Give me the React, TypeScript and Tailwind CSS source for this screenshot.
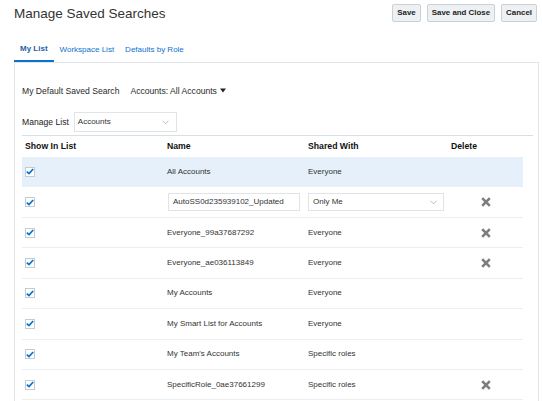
import React from 'react'

type Row = {
  name: string
  shared: string
  canDelete: boolean
  editing?: boolean
  selected?: boolean
}

const rows: Row[] = [
  { name: 'All Accounts', shared: 'Everyone', canDelete: false, selected: true },
  { name: 'AutoSS0d235939102_Updated', shared: 'Only Me', canDelete: true, editing: true },
  { name: 'Everyone_99a37687292', shared: 'Everyone', canDelete: true },
  { name: 'Everyone_ae036113849', shared: 'Everyone', canDelete: true },
  { name: 'My Accounts', shared: 'Everyone', canDelete: false },
  { name: 'My Smart List for Accounts', shared: 'Everyone', canDelete: false },
  { name: "My Team's Accounts", shared: 'Specific roles', canDelete: false },
  { name: 'SpecificRole_0ae37661299', shared: 'Specific roles', canDelete: true },
]

function Checkbox() {
  return (
    <span className="flex h-[10px] w-[10px] items-center justify-center border border-[#c3ccd3] bg-white">
      <svg width="8" height="7" viewBox="0 0 8 7">
        <path d="M0.8 3.6 L3 5.6 L7.2 1" fill="none" stroke="#0b72ce" strokeWidth="1.8" />
      </svg>
    </span>
  )
}

function Chevron() {
  return (
    <svg width="7" height="5" viewBox="0 0 7 5">
      <path d="M0.5 0.8 L3.5 3.8 L6.5 0.8" fill="none" stroke="#a9b1b8" strokeWidth="0.9" />
    </svg>
  )
}

function DeleteIcon() {
  return (
    <svg width="10" height="10" viewBox="0 0 10 10">
      <path d="M1.2 1.2 L8.8 8.8 M8.8 1.2 L1.2 8.8" stroke="#7d7d7d" strokeWidth="2.6" />
    </svg>
  )
}

function Button({ label }: { label: string }) {
  return (
    <button className="h-[18px] rounded-[2px] border border-[#c9d0d6] bg-[#eef1f4] px-[4px] text-[7.9px] font-bold leading-none text-[#222]">
      {label}
    </button>
  )
}

export default function App() {
  return (
    <div className="h-[401px] w-[542px] overflow-hidden bg-white font-['Liberation_Sans',Arial,sans-serif] text-[#333]">
      {/* Title + actions */}
      <div className="flex items-start justify-between pl-[14px] pr-[5px] pt-[4px]">
        <h1 className="mt-[1px] text-[13.5px] leading-[18px] text-[#333]">Manage Saved Searches</h1>
        <div className="flex gap-[6px]">
          <Button label="Save" />
          <Button label="Save and Close" />
          <Button label="Cancel" />
        </div>
      </div>

      {/* Tabs */}
      <div className="mt-[14px] flex pl-[14px] text-[8px]">
        <div className="flex h-[25px] items-center border-b-2 border-[#0b72ce] px-[6px] font-bold text-[#1d5fa8]">
          My List
        </div>
        <div className="flex h-[25px] items-center px-[6px] text-[#0b72ce]">Workspace List</div>
        <div className="flex h-[25px] items-center px-[5px] text-[#0b72ce]">Defaults by Role</div>
      </div>

      {/* Panel */}
      <div className="ml-[14px] mr-[3px] h-[400px] border border-b-0 border-[#e0e5e9] pl-[7px] pr-[5px]">
        <div className="mt-[18px] flex h-[20px] items-center text-[8.6px] text-[#2a2a2a]">
          <span>My Default Saved Search</span>
          <span className="ml-[11px] flex items-center gap-[3px]">
            Accounts: All Accounts
            <svg width="6" height="5" viewBox="0 0 6 5">
              <path d="M0 0.5 H6 L3 4.5 Z" fill="#222" />
            </svg>
          </span>
        </div>

        <div className="mt-[11px] flex items-center">
          <span className="text-[8.6px] text-[#222]">Manage List</span>
          <div className="ml-[5px] flex h-[20px] w-[103px] items-center justify-between border border-[#dfe4e8] pl-[3px] pr-[7px] text-[8px]">
            Accounts
            <Chevron />
          </div>
        </div>

        {/* Table */}
        <div className="mt-[3px] border-t border-[#d9e0e5]">
          <div className="grid h-[21px] grid-cols-[142px_141px_143px_1fr] items-center text-[8.7px] font-bold text-[#111]">
            <span className="pl-[3px]">Show In List</span>
            <span className="pl-[3px]">Name</span>
            <span className="pl-[3px]">Shared With</span>
            <span className="pl-[3px]">Delete</span>
          </div>
          <div className="w-[501px]">
            {rows.map(r => (
              <div
                key={r.name}
                className={`grid h-[30.43px] grid-cols-[142px_141px_143px_1fr] items-center border-b border-[#eceff2] text-[8px] ${r.selected ? 'bg-[#e5f0fb]' : ''}`}
              >
                <span className="pl-[3px]">
                  <Checkbox />
                </span>
                {r.editing ? (
                  <span className="pl-[4px]">
                    <span className="flex h-[18px] w-[132px] items-center border border-[#dfe4e8] bg-white pl-[4px]">
                      {r.name}
                    </span>
                  </span>
                ) : (
                  <span className="pl-[3px]">{r.name}</span>
                )}
                {r.editing ? (
                  <span className="pl-[3px]">
                    <span className="flex h-[18px] w-[136px] items-center justify-between border border-[#dfe4e8] bg-white pl-[4px] pr-[6px]">
                      {r.shared}
                      <Chevron />
                    </span>
                  </span>
                ) : (
                  <span className="pl-[3px]">{r.shared}</span>
                )}
                <span className="flex justify-center">{r.canDelete && <DeleteIcon />}</span>
              </div>
            ))}
          </div>
        </div>
      </div>
    </div>
  )
}
